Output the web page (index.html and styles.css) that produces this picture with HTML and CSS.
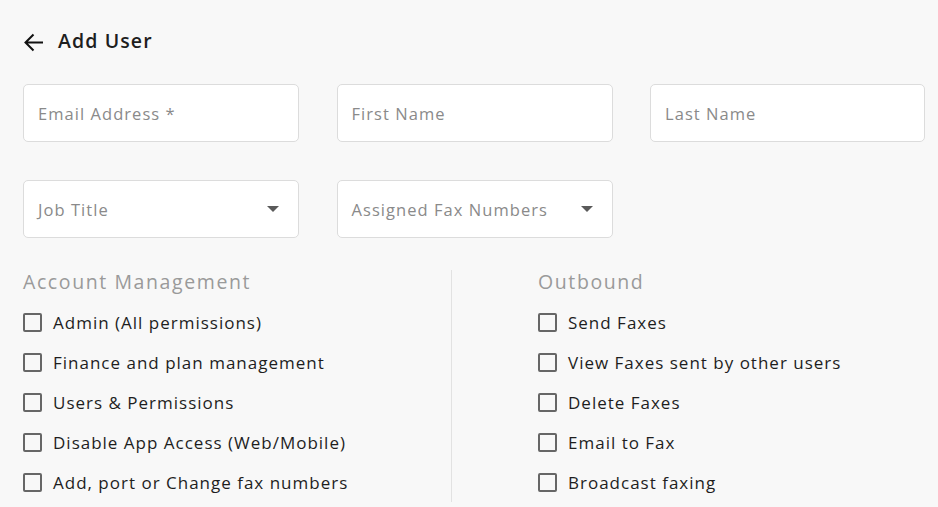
FILE: index.html
```html
<!DOCTYPE html>
<html>
<head>
<meta charset="utf-8">
<link rel="stylesheet" href="styles.css">
</head>
<body>
<div class="page">
  <header class="header">
    <svg class="back" width="21" height="19" viewBox="0 0 21 19"><path d="M20 9.5H2.5M10.5 1.5L2.5 9.5l8 8" fill="none" stroke="#111" stroke-width="2"/></svg>
    <h1 class="title">Add User</h1>
  </header>
  <div class="row">
    <div class="field"><span class="ph">Email Address *</span></div>
    <div class="field"><span class="ph">First Name</span></div>
    <div class="field"><span class="ph">Last Name</span></div>
  </div>
  <div class="row row2">
    <div class="field select"><span class="ph">Job Title</span><span class="caret"></span></div>
    <div class="field select"><span class="ph">Assigned Fax Numbers</span><span class="caret"></span></div>
  </div>
  <div class="perms">
    <section class="col left">
      <h2 class="sec">Account Management</h2>
      <label class="item"><span class="box"></span>Admin (All permissions)</label>
      <label class="item"><span class="box"></span>Finance and plan management</label>
      <label class="item"><span class="box"></span>Users &amp; Permissions</label>
      <label class="item"><span class="box"></span>Disable App Access (Web/Mobile)</label>
      <label class="item"><span class="box"></span>Add, port or Change fax numbers</label>
    </section>
    <section class="col right">
      <h2 class="sec">Outbound</h2>
      <label class="item"><span class="box"></span>Send Faxes</label>
      <label class="item"><span class="box"></span>View Faxes sent by other users</label>
      <label class="item"><span class="box"></span>Delete Faxes</label>
      <label class="item"><span class="box"></span>Email to Fax</label>
      <label class="item"><span class="box"></span>Broadcast faxing</label>
    </section>
  </div>
</div>
</body>
</html>
```
FILE: styles.css
```css
html, body { margin: 0; padding: 0; background: #f8f8f8; }
body { font-family: "Open Sans", "Noto Sans", sans-serif; color: #1e1e1e; overflow: hidden; height: 507px; }
.page { padding: 31px 10px 0 23px; }
.header { display: flex; align-items: center; height: 22px; }
.back { margin-right: 14px; }
.title { font-size: 19.5px; font-weight: 600; margin: -2px 0 0; letter-spacing: 1.1px; line-height: 24px; }
.row { display: grid; grid-template-columns: 276px 276px 275px; column-gap: 37.5px; margin-top: 31px; }
.row2 { margin-top: 38px; }
.field { box-sizing: border-box; height: 58px; background: #fff; border: 1px solid #dcdcdc; border-radius: 5px; display: flex; align-items: center; padding: 0 19px 0 14px; }
.ph { color: #8a8a8a; font-size: 16.5px; flex: 1; letter-spacing: 1.05px; line-height: 22px; padding-top: 1px; }
.caret { width: 0; height: 0; border-left: 6.5px solid transparent; border-right: 6.5px solid transparent; border-top: 6px solid #5a5a5a; }
.perms { display: grid; grid-template-columns: 429px 1fr; margin-top: 32px; }
.left { border-right: 1px solid #e2e2e2; }
.right { padding-left: 86px; }
.sec { font-size: 19.5px; font-weight: 500; color: #9a9a9a; margin: 0 0 8px; line-height: 24px; letter-spacing: 1.6px; }
.item { display: flex; align-items: center; height: 40px; font-size: 17px; letter-spacing: 1px; color: #1e1e1e; }
.box { box-sizing: border-box; width: 19px; height: 19px; border: 2px solid #666; border-radius: 2px; margin-right: 11px; }
```
